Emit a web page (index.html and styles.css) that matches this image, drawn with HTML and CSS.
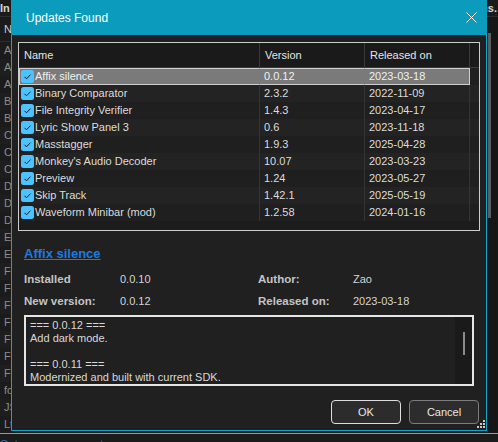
FILE: index.html
```html
<!DOCTYPE html>
<html lang="en">
<head>
    <meta charset="UTF-8">
    <title>Updates Found</title>
    <link rel="stylesheet" href="styles.css">
</head>
<body>
<div class="app">
    <div class="topbar"><span class="tl">In</span><span class="tr">ns.</span></div>
    <div class="main">
        <div class="bglist">
            <div class="bghead">N</div>
            <div class="bgrow">A</div>
            <div class="bgrow">A</div>
            <div class="bgrow">A</div>
            <div class="bgrow">B</div>
            <div class="bgrow">B</div>
            <div class="bgrow">C</div>
            <div class="bgrow">C</div>
            <div class="bgrow">C</div>
            <div class="bgrow">D</div>
            <div class="bgrow">D</div>
            <div class="bgrow">D</div>
            <div class="bgrow">E</div>
            <div class="bgrow">E</div>
            <div class="bgrow">F</div>
            <div class="bgrow">F</div>
            <div class="bgrow">F</div>
            <div class="bgrow">F</div>
            <div class="bgrow">F</div>
            <div class="bgrow">F</div>
            <div class="bgrow">F</div>
            <div class="bgrow">fo</div>
            <div class="bgrow">JS</div>
            <div class="bgrow">Lt</div>
        </div>
        <div class="bgsb"><div class="bgthumb"></div></div>
    </div>
    <div class="status"><a class="more">Get more components</a></div>

    <div class="dlg">
        <div class="title">
            <span>Updates Found</span>
            <svg class="close" width="11" height="11" viewBox="0 0 11 11"><path d="M0.5 0.5L10.5 10.5M10.5 0.5L0.5 10.5" stroke="#fff" stroke-width="1"/></svg>
        </div>
        <div class="dbody">
            <div class="list">
                <div class="lhead">
                    <div class="c">Name</div>
                    <div class="c">Version</div>
                    <div class="c">Released on</div>
                </div>
                <div class="row sel">
                    <div class="c name"><svg class="chk" width="13" height="13" viewBox="0 0 13 13"><rect width="13" height="13" rx="2.5" fill="#4cc2ff"/><path d="M3.5 6.8l2 2 4-4.2" fill="none" stroke="#1a1a1a"/></svg>Affix silence</div>
                    <div class="c">0.0.12</div>
                    <div class="c">2023-03-18</div>
                </div>
                <div class="row">
                    <div class="c name"><svg class="chk" width="13" height="13" viewBox="0 0 13 13"><rect width="13" height="13" rx="2.5" fill="#4cc2ff"/><path d="M3.5 6.8l2 2 4-4.2" fill="none" stroke="#1a1a1a"/></svg>Binary Comparator</div>
                    <div class="c">2.3.2</div>
                    <div class="c">2022-11-09</div>
                </div>
                <div class="row">
                    <div class="c name"><svg class="chk" width="13" height="13" viewBox="0 0 13 13"><rect width="13" height="13" rx="2.5" fill="#4cc2ff"/><path d="M3.5 6.8l2 2 4-4.2" fill="none" stroke="#1a1a1a"/></svg>File Integrity Verifier</div>
                    <div class="c">1.4.3</div>
                    <div class="c">2023-04-17</div>
                </div>
                <div class="row">
                    <div class="c name"><svg class="chk" width="13" height="13" viewBox="0 0 13 13"><rect width="13" height="13" rx="2.5" fill="#4cc2ff"/><path d="M3.5 6.8l2 2 4-4.2" fill="none" stroke="#1a1a1a"/></svg>Lyric Show Panel 3</div>
                    <div class="c">0.6</div>
                    <div class="c">2023-11-18</div>
                </div>
                <div class="row">
                    <div class="c name"><svg class="chk" width="13" height="13" viewBox="0 0 13 13"><rect width="13" height="13" rx="2.5" fill="#4cc2ff"/><path d="M3.5 6.8l2 2 4-4.2" fill="none" stroke="#1a1a1a"/></svg>Masstagger</div>
                    <div class="c">1.9.3</div>
                    <div class="c">2025-04-28</div>
                </div>
                <div class="row">
                    <div class="c name"><svg class="chk" width="13" height="13" viewBox="0 0 13 13"><rect width="13" height="13" rx="2.5" fill="#4cc2ff"/><path d="M3.5 6.8l2 2 4-4.2" fill="none" stroke="#1a1a1a"/></svg>Monkey's Audio Decoder</div>
                    <div class="c">10.07</div>
                    <div class="c">2023-03-23</div>
                </div>
                <div class="row">
                    <div class="c name"><svg class="chk" width="13" height="13" viewBox="0 0 13 13"><rect width="13" height="13" rx="2.5" fill="#4cc2ff"/><path d="M3.5 6.8l2 2 4-4.2" fill="none" stroke="#1a1a1a"/></svg>Preview</div>
                    <div class="c">1.24</div>
                    <div class="c">2023-05-27</div>
                </div>
                <div class="row">
                    <div class="c name"><svg class="chk" width="13" height="13" viewBox="0 0 13 13"><rect width="13" height="13" rx="2.5" fill="#4cc2ff"/><path d="M3.5 6.8l2 2 4-4.2" fill="none" stroke="#1a1a1a"/></svg>Skip Track</div>
                    <div class="c">1.42.1</div>
                    <div class="c">2025-05-19</div>
                </div>
                <div class="row">
                    <div class="c name"><svg class="chk" width="13" height="13" viewBox="0 0 13 13"><rect width="13" height="13" rx="2.5" fill="#4cc2ff"/><path d="M3.5 6.8l2 2 4-4.2" fill="none" stroke="#1a1a1a"/></svg>Waveform Minibar (mod)</div>
                    <div class="c">1.2.58</div>
                    <div class="c">2024-01-16</div>
                </div>
            </div>

            <a class="plink">Affix silence</a>

            <div class="info">
                <span class="lbl">Installed</span><span class="val">0.0.10</span>
                <span class="lbl">Author:</span><span class="val">Zao</span>
                <span class="lbl">New version:</span><span class="val">0.0.12</span>
                <span class="lbl">Released on:</span><span class="val">2023-03-18</span>
            </div>

            <div class="log">
                <div class="logtext">=== 0.0.12 ===
Add dark mode.

=== 0.0.11 ===
Modernized and built with current SDK.</div>
                <div class="vs"><div class="vthumb"></div></div>
            </div>

            <div class="btns">
                <button class="btn def">OK</button>
                <button class="btn">Cancel</button>
            </div>
        </div>
        <svg class="grip" width="8" height="8" viewBox="0 0 8 8">
            <rect x="6" y="0" width="2" height="2" fill="#c8c8c8"/>
            <rect x="3" y="3" width="2" height="2" fill="#c8c8c8"/>
            <rect x="6" y="3" width="2" height="2" fill="#c8c8c8"/>
            <rect x="0" y="6" width="2" height="2" fill="#c8c8c8"/>
            <rect x="3" y="6" width="2" height="2" fill="#c8c8c8"/>
            <rect x="6" y="6" width="2" height="2" fill="#c8c8c8"/>
        </svg>
    </div>
</div>
</body>
</html>
```

FILE: styles.css
```css
body {
    margin: 0;
    background: #1b1b1b;
    font-family: "Liberation Sans", Arial, sans-serif;
    font-size: 11px;
    color: #dcdcdc;
}
.app {
    position: relative;
    width: 498px;
    height: 442px;
    overflow: hidden;
}

/* main window behind the dialog */
.topbar {
    height: 16px;
    border-bottom: 1px solid #2c2c2c;
    display: flex;
    justify-content: space-between;
    align-items: center;
    font-weight: bold;
    color: #d6d6d6;
}
.tl { padding-left: 0; }
.tr { padding-right: 1px; }
.main {
    display: flex;
    height: 416px;
}
.bglist {
    flex: 1;
}
.bghead {
    height: 24px;
    line-height: 24px;
    border-bottom: 1px solid #2c2c2c;
    padding-left: 4px;
    color: #cfcfcf;
}
.bgrow {
    height: 17px;
    line-height: 17px;
    padding-left: 4px;
    color: #8c8c8c;
}
.bgrow:nth-child(odd) { background: #1e1e1e; }
.bgsb {
    width: 11px;
    background: #161616;
}
.bgthumb {
    margin: 16px 0 0 1px;
    width: 3px;
    height: 185px;
    background: #5e5e5e;
}
.status {
    border-top: 1px solid #9a9a9a;
    height: 9px;
}
.more {
    display: block;
    padding-top: 2px;
    line-height: 16px;
    color: #2f6fcf;
    text-decoration: underline;
}

/* dialog */
.dlg {
    position: absolute;
    left: 11px;
    top: 0;
    width: 476px;
}
.title {
    height: 35px;
    background: #0a9bbd;
    display: flex;
    align-items: center;
    justify-content: space-between;
    padding: 0 10px 0 15px;
    color: #fff;
    font-size: 12px;
}
.close { display: block; }
.dbody {
    height: 396px;
    box-sizing: border-box;
    border: 1px solid #13a6cb;
    border-top: none;
    background: #202020;
    padding-top: 7px;
}

.list {
    margin: 0 6px;
    height: 189px;
    box-sizing: border-box;
    border: 1px solid #cdcdcd;
    background: #1c1c1c;
}
.lhead, .row {
    display: grid;
    grid-template-columns: 241px 105px 105px;
}
.lhead {
    height: 24px;
    border-bottom: 1px solid #3a3a3a;
    background: #1a1a1a;
}
.lhead .c {
    line-height: 24px;
    padding-left: 5px;
    border-right: 1px solid #3a3a3a;
    color: #e4e4e4;
}
.row {
    height: 17px;
}
.row:nth-child(even) { background: #1f1f1f; }
.row:nth-child(odd) { background: #232323; }
.row .c {
    line-height: 17px;
    padding-left: 4px;
    border-right: 1px solid #343434;
    white-space: nowrap;
}
.row .name {
    display: flex;
    align-items: center;
    padding-left: 2px;
}
.chk {
    flex: none;
    margin-right: 1px;
}
.row.sel .c {
    background: #7a7a7a;
    border-color: #7a7a7a;
    border-top: 1px solid #cfcfcf;
    border-bottom: 1px solid #cfcfcf;
    line-height: 15px;
    color: #f0f0f0;
}
.row.sel .c:first-child { border-left: 1px solid #cfcfcf; padding-left: 1px; }
.row.sel .c:last-child { border-right: 1px solid #cfcfcf; }

.plink {
    display: block;
    margin: 15px 0 0 12px;
    font-size: 13px;
    line-height: 16px;
    font-weight: bold;
    color: #1f7ae0;
    text-decoration: underline;
}

.info {
    display: grid;
    grid-template-columns: 96px 138px 95px auto;
    row-gap: 6px;
    margin: 9px 0 0 12px;
    line-height: 16px;
}
.lbl {
    font-weight: bold;
    font-size: 11.5px;
    color: #c4c4c4;
}
.val { color: #d4d4d4; }

.log {
    display: flex;
    margin: 6px 12px 0;
    height: 71px;
    box-sizing: border-box;
    border: 2px solid #e6e6e6;
    background: #202020;
}
.logtext {
    flex: 1;
    padding: 2px 4px;
    line-height: 13px;
    white-space: pre-line;
    color: #d8d8d8;
}
.vs {
    width: 17px;
    background: #1a1a1a;
}
.vthumb {
    margin: 15px 0 0 8px;
    width: 2px;
    height: 23px;
    background: #8a8a8a;
}

.btns {
    display: flex;
    justify-content: flex-end;
    gap: 8px;
    margin-top: 14px;
    padding-right: 7px;
}
.btn {
    width: 70px;
    height: 24px;
    border: 1px solid #7c7c7c;
    border-radius: 4px;
    background: #2c2c2c;
    color: #e8e8e8;
    font-family: "Liberation Sans", Arial, sans-serif;
    font-size: 11px;
    padding: 0;
}
.btn.def {
    border-color: #dedede;
}
.grip {
    position: absolute;
    left: 466px;
    top: 420px;
}
```
